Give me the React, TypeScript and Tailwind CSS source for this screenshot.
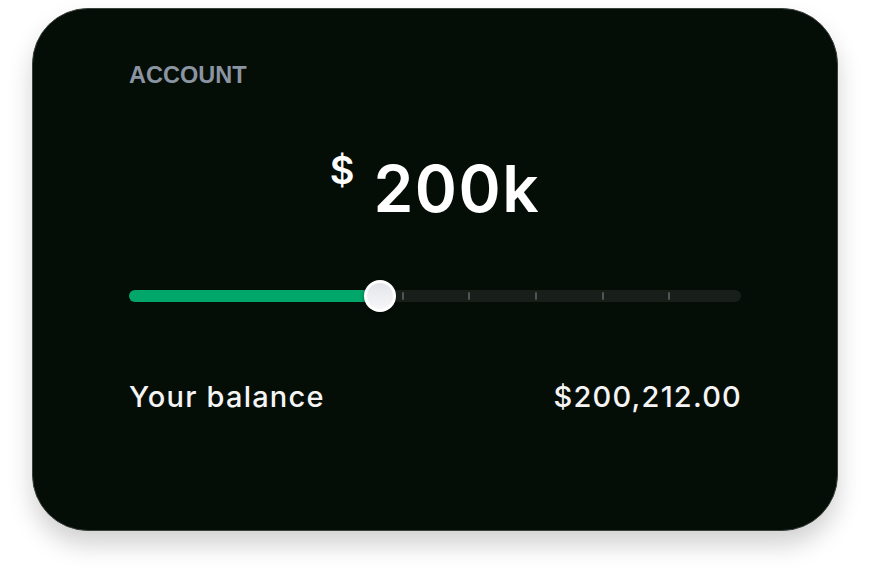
import React from 'react'

const ticks = [402, 468, 535, 602, 668]

const App = () => {
  return (
    <div className="w-[870px] h-[588px] bg-white pt-[8px] pl-[32px]" style={{ fontFamily: 'Inter, "Liberation Sans", sans-serif' }}>
      <div className="w-[806px] h-[523px] rounded-[56px] bg-[#050d07] border-[1.5px] border-[#3a403c] shadow-[0_14px_24px_rgba(0,0,0,0.18)] px-[96px] pt-[53px]">
        <div className="text-[23.5px] leading-[26px] font-bold text-[#8b95a2]" style={{ fontFamily: '"Liberation Sans", Arial, sans-serif' }}>ACCOUNT</div>

        {/* Amount */}
        <div className="flex items-start justify-center mt-[69px] text-white">
          <span className="text-[38px] leading-[38px] font-semibold mt-[-6px] mr-[19px]">$</span>
          <span className="text-[64px] leading-[64px] font-semibold tracking-[1.5px]">200k</span>
        </div>

        {/* Slider */}
        <div className="relative mt-[69px] h-[12px] rounded-full bg-[#181e1a]">
          <div className="absolute left-0 top-0 h-full w-[252px] rounded-full bg-[#00a66a]" />
          {ticks.map((x) => (
            <div key={x} className="absolute top-[2px] w-[2px] h-[8px] rounded-full bg-[#4d5654]" style={{ left: x - 129 }} />
          ))}
          <div className="absolute left-[235px] top-[-10px] w-[32px] h-[32px] rounded-full bg-white p-[3px] shadow-[0_2px_4px_rgba(0,0,0,0.4)]">
            <div className="w-full h-full rounded-full bg-gradient-to-b from-[#e4e5ea] to-[#f7f7f9]" />
          </div>
        </div>

        {/* Balance */}
        <div className="flex items-center justify-between mt-[78px] text-[29px] leading-[34px] font-medium tracking-[1.2px] text-[#f4f4f4]">
          <span>Your balance</span>
          <span className="mr-[-1px]">$200,212.00</span>
        </div>
      </div>
    </div>
  )
}

export default App
